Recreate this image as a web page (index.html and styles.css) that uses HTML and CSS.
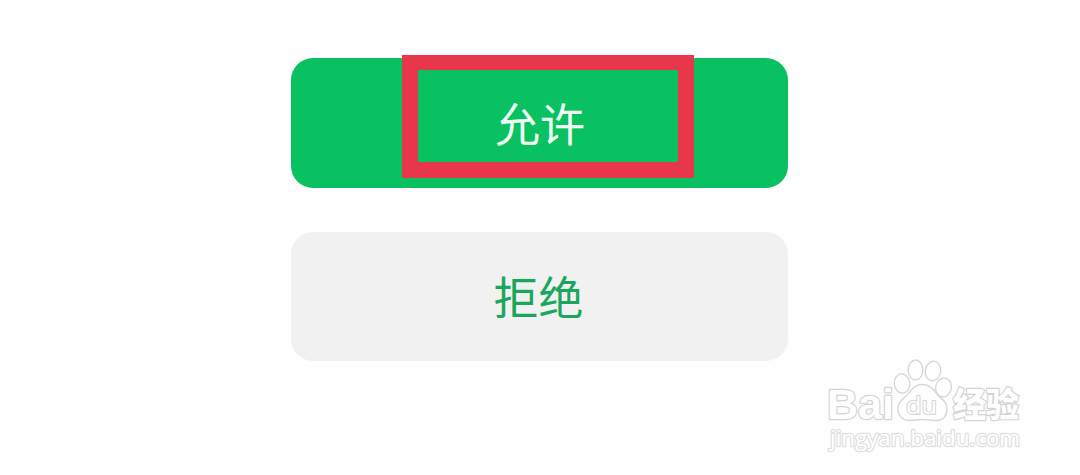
FILE: index.html
```
<!DOCTYPE html>
<html lang="zh-CN">
<head>
    <meta charset="UTF-8">
    <meta name="viewport" content="width=device-width, initial-scale=1.0">
    <title>授权</title>
    <link rel="stylesheet" href="styles.css">
</head>
<body>

    <div class="actions">
        <button type="button" class="btn btn-allow">
            允许
            <span class="highlight"></span>
        </button>
        <button type="button" class="btn btn-deny">拒绝</button>
    </div>

    <svg class="watermark" width="230" height="120" viewBox="0 0 230 120">
        <!-- paw -->
        <g class="paw">
            <ellipse cx="92" cy="38.5" rx="7.7" ry="9.7" transform="rotate(-5 92 38.5)"/>
            <ellipse cx="105.5" cy="25" rx="7.3" ry="10"/>
            <ellipse cx="123" cy="26" rx="7.7" ry="9.8" transform="rotate(10 123 26)"/>
            <ellipse cx="133.5" cy="42.5" rx="7.9" ry="9.5" transform="rotate(12 133.5 42.5)"/>
            <path d="M112 39.500C106 39.500 102 43 98 49C94 54 88 56 88 64C88 71 93 75.500 99 75.500C104 75.500 107 74.500 112 74.500C117 74.500 121 75.500 127 75.500C133 75.500 137 71 137 64C137 56 131 54 127 49C123 43 119 39.500 112 39.500Z"/>
        </g>
        <text class="brand" x="17" y="74" textLength="67" lengthAdjust="spacingAndGlyphs">Bai</text>
        <text class="du" x="96" y="69" textLength="31" lengthAdjust="spacingAndGlyphs">du</text>
        <text class="jingyan" x="143" y="72" textLength="66" lengthAdjust="spacingAndGlyphs">经验</text>
        <text class="site" x="20" y="101" textLength="190" lengthAdjust="spacingAndGlyphs">jingyan.baidu.com</text>
    </svg>

</body>
</html>
```
FILE: styles.css
```
body {
    margin: 0;
    height: 475px;
    position: relative;
    overflow: hidden;
    background-color: #fefefe;
    font-family: "Noto Sans CJK SC", sans-serif;
}
.actions {
    display: flex;
    flex-direction: column;
    align-items: center;
    gap: 44px;
    padding: 58px 2px 0 0;
}
.btn {
    position: relative;
    width: 497px;
    height: 130px;
    padding: 0 1px 3px 0;
    border: none;
    border-radius: 22px;
    font-family: inherit;
    font-size: 45px;
    line-height: 1;
}
.btn-allow {
    padding: 0 0 1px 2px;
    background-color: #09c160;
    color: #effff5;
}
.btn-deny {
    height: 129px;
    background-color: #f1f1f1;
    color: #1aa65c;
}
/* red frame around the allow label */
.highlight {
    position: absolute;
    left: 111px;
    top: -3px;
    width: 292px;
    height: 123px;
    box-sizing: border-box;
    border: 16px solid #e8374a;
    border-top-width: 15px;
}
.watermark {
    position: absolute;
    left: 810px;
    top: 345px;
}
.watermark text {
    fill: #fff;
    stroke: #d4d4d4;
    stroke-width: 2.4;
    stroke-linejoin: round;
    paint-order: stroke;
}
.paw {
    fill: #fff;
    stroke: #d8d8d8;
    stroke-width: 1.4;
}
.brand {
    font: bold 43px "Liberation Sans", Arial, sans-serif;
}
.watermark .du {
    font: 500 23px "Open Sans", sans-serif;
    stroke-width: 2;
}
.jingyan {
    font: 900 34px "Noto Sans CJK SC", sans-serif;
}
.watermark .site {
    font: 500 21px "Open Sans", sans-serif;
    stroke: #e0e0e0;
}
```
